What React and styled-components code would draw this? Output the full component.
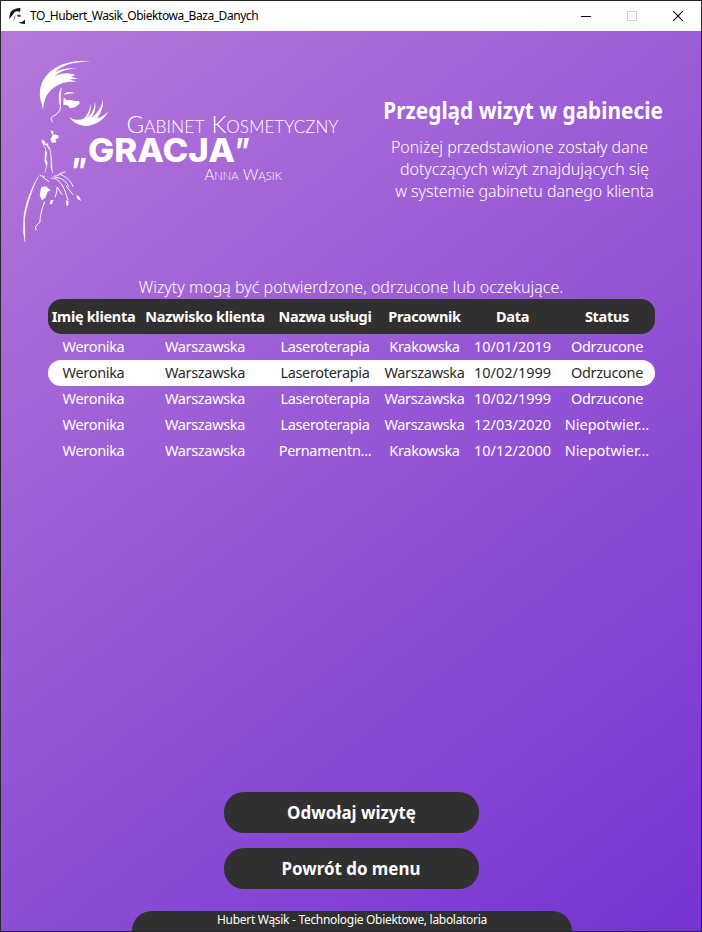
import React from "react";
import styled, { createGlobalStyle } from "styled-components";

const Global = createGlobalStyle`
  * { box-sizing: border-box; }
  html, body { margin: 0; padding: 0; overflow: hidden; }
  body { font-family: "Noto Sans", "Open Sans", sans-serif; color: #fff; }
`;

const Window = styled.div`
  width: 702px;
  height: 932px;
  display: flex;
  flex-direction: column;
  border: 1px solid #29272c;
  background: #fff;
`;

const TitleBar = styled.header`
  height: 30px;
  flex: none;
  display: flex;
  align-items: center;
  padding-left: 8px;
  background: #fff;
  color: #000;
`;

const AppName = styled.span`
  flex: 1;
  padding-left: 4px;
  font-size: 12px;
  line-height: 16px;
  letter-spacing: ${(p) => p.$track}px;
  white-space: nowrap;
`;

const WindowButton = styled.button`
  width: 46px;
  height: 30px;
  padding: 0 0 1px;
  border: 0;
  background: none;
  display: flex;
  align-items: center;
  justify-content: center;
`;

const Body = styled.main`
  flex: 1;
  min-height: 0;
  display: flex;
  flex-direction: column;
  align-items: center;
  background: linear-gradient(142deg, #b477d9 0%, #7534d2 100%);
`;

const Header = styled.section`
  width: 100%;
  height: 245px;
  display: flex;
`;

const Intro = styled.div`
  width: 320px;
  margin-left: 6px;
  padding-top: 64px;
  display: flex;
  flex-direction: column;
  align-items: center;
`;

const Heading = styled.h1`
  margin: 0 0 9px;
  font-size: 22.5px;
  line-height: 32px;
  font-weight: 700;
  transform: scaleX(0.925);
  white-space: nowrap;
`;

const Line = styled.p`
  margin: 0;
  font-size: 16px;
  line-height: 22px;
  font-weight: 300;
  letter-spacing: ${(p) => p.$track || 0}px;
  padding-left: ${(p) => p.$left || 0}px;
  padding-right: ${(p) => p.$right || 0}px;
  white-space: nowrap;
`;

const Table = styled.div`
  width: 607px;
  margin-top: 1px;
  margin-right: -1px;
`;

const Row = styled.div`
  display: grid;
  grid-template-columns: 91px 132px 108px 91px 85px 100px;
  align-items: center;
  height: 26px;
  border-radius: 13px;
  font-size: 14.5px;
  line-height: 20px;
  padding-bottom: 2px;
  background: ${(p) => (p.$selected ? "#fff" : "transparent")};
  color: ${(p) => (p.$selected ? "#2b2b2b" : "#fff")};
`;

const HeadRow = styled(Row)`
  height: 35px;
  padding-bottom: 1px;
  border-radius: 14px;
  background: #303030;
  font-weight: 700;
`;

const Cell = styled.span`
  text-align: center;
  white-space: nowrap;
  letter-spacing: ${(p) => p.$track || 0}px;
  &:last-child { padding-left: 4px; }
`;

const Actions = styled.div`
  margin-top: auto;
  display: flex;
  flex-direction: column;
  gap: 15px;
`;

const Action = styled.button`
  width: 255px;
  height: 41px;
  padding: 0 0 1px;
  border: 0;
  border-radius: 20px;
  background: #303030;
  color: #fff;
  font: 700 18px/40px "Noto Sans", sans-serif;
`;

const ActionLabel = styled.span`
  display: inline-block;
  transform: scaleX(0.94);
`;

const Footer = styled.footer`
  width: 440px;
  height: 20px;
  margin: 22px 0 0 2px;
  border-radius: 20px 20px 0 0;
  background: #303030;
  font-size: 12px;
  line-height: 17px;
  font-weight: 400;
  text-align: center;
  letter-spacing: ${(p) => p.$track}px;
`;

const AppIcon = () => (
  <svg width="17" height="18" viewBox="0 0 17 18">
    <path d="M0.500 12C0 5 3 1.500 11.500 1L11 5C8 3.500 5.500 4.500 4 7.500L2 10Z" fill="#111" />
    <path d="M5 11.500L6.500 8.500M4.500 13.500L6 11M8 7.500L9 10L12 9" fill="none" stroke="#888" strokeWidth="1" />
    <path d="M8.500 8L11.500 7.500L11.500 9.500L9 9.500Z" fill="#444" />
    <path d="M9.500 15.500C12.500 15.500 14.500 14.500 16 12.500L16 17L12 16.500Z" fill="#111" />
  </svg>
);

const Logo = () => (
  <svg width="356" height="247" viewBox="1 31 356 247" fill="#fff">
    <g transform="translate(15 50) scale(.33333)">
      <path d="M229 34C170 29 126 43 98 72C77 94 70 127 77 151L84 179C87 151 94 132 111 117C132 99 157 92 185 96L164 88L188 86L168 80L181 75C163 68 142 66 118 80C141 59 164 55 197 57C165 52 142 55 120 67C142 44 178 36 229 34Z" />
      <path d="M139 115C130 132 133 147 136 166C138 178 130 190 119 196C107 202 106 207 113 217" fill="none" stroke="#fff" strokeWidth="3" />
      <path d="M133 135L139 115L138 162L134 166Z" opacity=".75" />
      <path d="M145 134C155 124 168 125 180 130C168 129 157 132 145 134Z" />
      <path d="M146 142L155 151L168 150L180 153L192 153L194 161L180 172L165 175L158 166L145 164Z" />
      <path d="M163 202C179 211 192 211 203 207C216 199 225 181 226 161C230 180 223 194 216 203C232 193 239 175 240 154C244 174 238 193 228 204C247 192 260 172 264 148C266 170 257 193 245 205C261 201 271 194 281 183C268 207 249 222 218 228C194 229 175 218 163 202Z" />
      <path d="M106 240L117 245L113 253L130 256L131 264L121 268L124 277L111 278L106 267L113 257Z" />
      <path d="M82 269L91 276L89 283L98 280L103 299L95 286L85 282ZM81 271C80 281 87 286 92 296L89 332L94 347L90 368L97 340L93 327L96 309ZM103 291C110 309 109 335 113 369L108 352L107 315Z" stroke="#fff" />
      <path d="M70 380C48 413 28 470 26 506L25 546L30 576L29 505C35 466 53 412 70 380Z" stroke="#fff" />
      <path d="M90 379Q80 379 74 376M83 381L102 395M116 379C129 380 137 366 151 366M109 384C127 384 133 396 141 405C151 419 152 432 159 450M121 382C143 384 154 396 161 410M134 372C154 381 168 393 174 410M153 407Q163 421 174 434M126 411Q127 428 120 442M127 411Q134 424 142 435" fill="none" stroke="#fff" strokeWidth="3" />
      <path d="M78 414C84 408 94 408 98 413L107 421L98 425L91 443L81 451L74 436ZM107 450L115 450L112 461L104 463ZM154 450L161 454L159 469L153 464ZM184 435L194 441L198 453L187 447Z" />
      <path d="M89 455C79 482 75 499 75 516L62 529L63 541" fill="none" stroke="#fff" strokeWidth="3" />
    </g>
    <g fontFamily="Lato" fontWeight="300">
      <text x="126.500" y="132.500" fontSize="24" textLength="78" lengthAdjust="spacingAndGlyphs">G<tspan fontSize="17.500">ABINET</tspan></text>
      <text x="211.500" y="132.500" fontSize="24" textLength="127" lengthAdjust="spacingAndGlyphs">K<tspan fontSize="17.500">OSMETYCZNY</tspan></text>
      <text x="204.500" y="180" fontSize="16" textLength="34" lengthAdjust="spacingAndGlyphs">A<tspan fontSize="12">NNA</tspan></text>
      <text x="243" y="180" fontSize="16" textLength="39" lengthAdjust="spacingAndGlyphs">W<tspan fontSize="12">ĄSIK</tspan></text>
    </g>
    <g fontFamily="Inter" fontWeight="800" fontSize="33">
      <text x="72" y="162.300" textLength="15" lengthAdjust="spacingAndGlyphs">„</text>
      <text x="88" y="162.300" textLength="147" lengthAdjust="spacingAndGlyphs">GRACJA</text>
      <text x="235" y="162.300" textLength="15" lengthAdjust="spacingAndGlyphs">”</text>
    </g>
  </svg>
);

const columns = ["Imię klienta", "Nazwisko klienta", "Nazwa usługi", "Pracownik", "Data", "Status"];

const visits = [
  ["Weronika", "Warszawska", "Laseroterapia", "Krakowska", "10/01/2019", "Odrzucone"],
  ["Weronika", "Warszawska", "Laseroterapia", "Warszawska", "10/02/1999", "Odrzucone"],
  ["Weronika", "Warszawska", "Laseroterapia", "Warszawska", "10/02/1999", "Odrzucone"],
  ["Weronika", "Warszawska", "Laseroterapia", "Warszawska", "12/03/2020", "Niepotwier..."],
  ["Weronika", "Warszawska", "Pernamentn...", "Krakowska", "10/12/2000", "Niepotwier..."],
];

// Names are set slightly tighter than dates and shortened values.
const trackFor = (value) => {
  if (/^[A-Z][a-z]+$/.test(value)) return -0.32;
  return value.startsWith("Pern") ? -0.3 : 0;
};

export default function App() {
  return (
    <>
      <Global />
      <Window>
        <TitleBar>
          <AppIcon />
          <AppName $track={-0.45}>TO_Hubert_Wasik_Obiektowa_Baza_Danych</AppName>
          <WindowButton aria-label="Minimize">
            <svg width="10" height="10"><path d="M0 5.500H10" stroke="#000" /></svg>
          </WindowButton>
          <WindowButton aria-label="Maximize">
            <svg width="10" height="10"><path d="M.5.5H9.500V9.500H.5Z" fill="none" stroke="#ccc" /></svg>
          </WindowButton>
          <WindowButton aria-label="Close">
            <svg width="10" height="10"><path d="M0 0L10 10M10 0L0 10" stroke="#000" strokeWidth="1.100" /></svg>
          </WindowButton>
        </TitleBar>
        <Body>
          <Header>
            <Logo />
            <Intro>
              <Heading>Przegląd wizyt w gabinecie</Heading>
              <Line $right={7}>Poniżej przedstawione zostały dane</Line>
              <Line $left={3}>dotyczących wizyt znajdujących się</Line>
              <Line $left={3} $track={-0.05}>w systemie gabinetu danego klienta</Line>
            </Intro>
          </Header>
          <Line>Wizyty mogą być potwierdzone, odrzucone lub oczekujące.</Line>
          <Table>
            <HeadRow>
              {columns.map((c) => <Cell key={c} $track={-0.3}>{c}</Cell>)}
            </HeadRow>
            {visits.map((visit, i) => (
              <Row key={i} $selected={i === 1}>
                {visit.map((value, j) => <Cell key={j} $track={trackFor(value)}>{value}</Cell>)}
              </Row>
            ))}
          </Table>
          <Actions>
            <Action><ActionLabel>Odwołaj wizytę</ActionLabel></Action>
            <Action><ActionLabel>Powrót do menu</ActionLabel></Action>
          </Actions>
          <Footer $track={-0.3}>Hubert Wąsik - Technologie Obiektowe, labolatoria</Footer>
        </Body>
      </Window>
    </>
  );
}
